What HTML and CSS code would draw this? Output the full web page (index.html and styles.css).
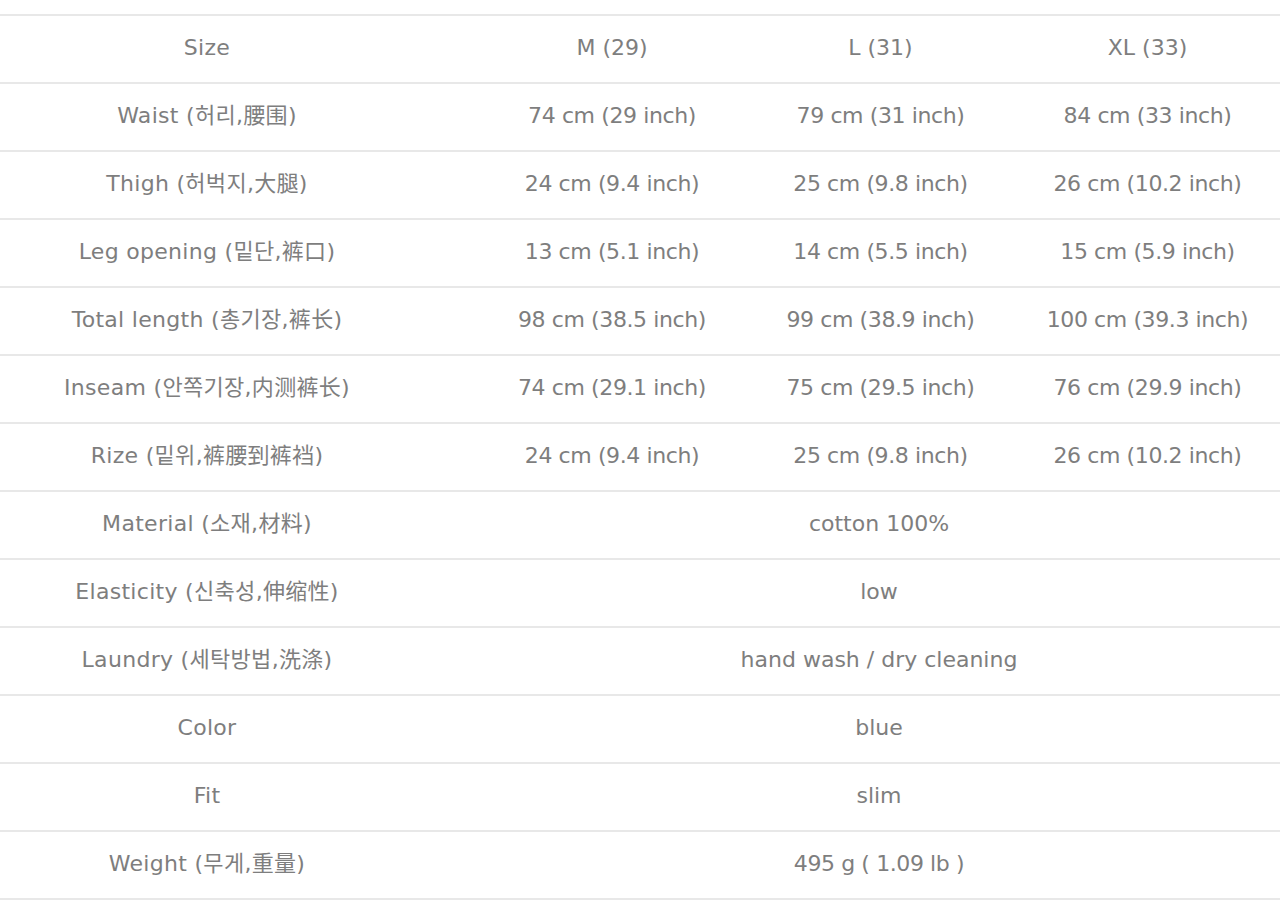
FILE: index.html
```html
<!DOCTYPE html>
<html lang="ko">
<head>
<meta charset="utf-8">
<link rel="stylesheet" href="styles.css">
</head>
<body>
<div class="sheet">
  <div class="row"><div class="cell label">Size</div><div class="cell">M (29)</div><div class="cell">L (31)</div><div class="cell">XL (33)</div></div>
  <div class="row"><div class="cell label">Waist (허리,腰围)</div><div class="cell num">74 cm (29 inch)</div><div class="cell num">79 cm (31 inch)</div><div class="cell num">84 cm (33 inch)</div></div>
  <div class="row"><div class="cell label">Thigh (허벅지,大腿)</div><div class="cell num">24 cm (9.4 inch)</div><div class="cell num">25 cm (9.8 inch)</div><div class="cell num">26 cm (10.2 inch)</div></div>
  <div class="row"><div class="cell label">Leg opening (밑단,裤口)</div><div class="cell num">13 cm (5.1 inch)</div><div class="cell num">14 cm (5.5 inch)</div><div class="cell num">15 cm (5.9 inch)</div></div>
  <div class="row"><div class="cell label">Total length (총기장,裤长)</div><div class="cell num">98 cm (38.5 inch)</div><div class="cell num">99 cm (38.9 inch)</div><div class="cell num">100 cm (39.3 inch)</div></div>
  <div class="row"><div class="cell label">Inseam (안쪽기장,内测裤长)</div><div class="cell num">74 cm (29.1 inch)</div><div class="cell num">75 cm (29.5 inch)</div><div class="cell num">76 cm (29.9 inch)</div></div>
  <div class="row"><div class="cell label">Rize (밑위,裤腰到裤裆)</div><div class="cell num">24 cm (9.4 inch)</div><div class="cell num">25 cm (9.8 inch)</div><div class="cell num">26 cm (10.2 inch)</div></div>
  <div class="row"><div class="cell label">Material (소재,材料)</div><div class="cell span">cotton 100%</div></div>
  <div class="row"><div class="cell label">Elasticity (신축성,伸缩性)</div><div class="cell span">low</div></div>
  <div class="row"><div class="cell label">Laundry (세탁방법,洗涤)</div><div class="cell span">hand wash / dry cleaning</div></div>
  <div class="row"><div class="cell label">Color</div><div class="cell span">blue</div></div>
  <div class="row"><div class="cell label">Fit</div><div class="cell span">slim</div></div>
  <div class="row last"><div class="cell label">Weight (무게,重量)</div><div class="cell span num">495 g ( 1.09 lb )</div></div>
</div>
</body>
</html>
```

FILE: styles.css
```css
html, body {
  margin: 0;
  padding: 0;
  background: #ffffff;
}

body {
  font-family: "DejaVu Sans", "Noto Sans CJK KR", sans-serif;
  font-size: 22px;
  color: #7e7e7e;
  overflow: hidden;
}

.sheet {
  margin-top: 14px;
  width: 1280px;
}

.row {
  display: grid;
  grid-template-columns: 478px 268px 269px 265px;
  height: 68px;
  box-sizing: border-box;
  border-top: 2px solid #e8e8e8;
}

.row.last {
  height: 70px;
  border-bottom: 2px solid #e8e8e8;
}

.cell {
  display: flex;
  align-items: center;
  justify-content: center;
  white-space: nowrap;
  line-height: 26px;
  padding-bottom: 3px;
}

.cell.num {
  letter-spacing: -0.4px;
}

.cell.label {
  padding-right: 64px;
  letter-spacing: 0.3px;
}

.cell.span {
  grid-column: 2 / 5;
}
```
